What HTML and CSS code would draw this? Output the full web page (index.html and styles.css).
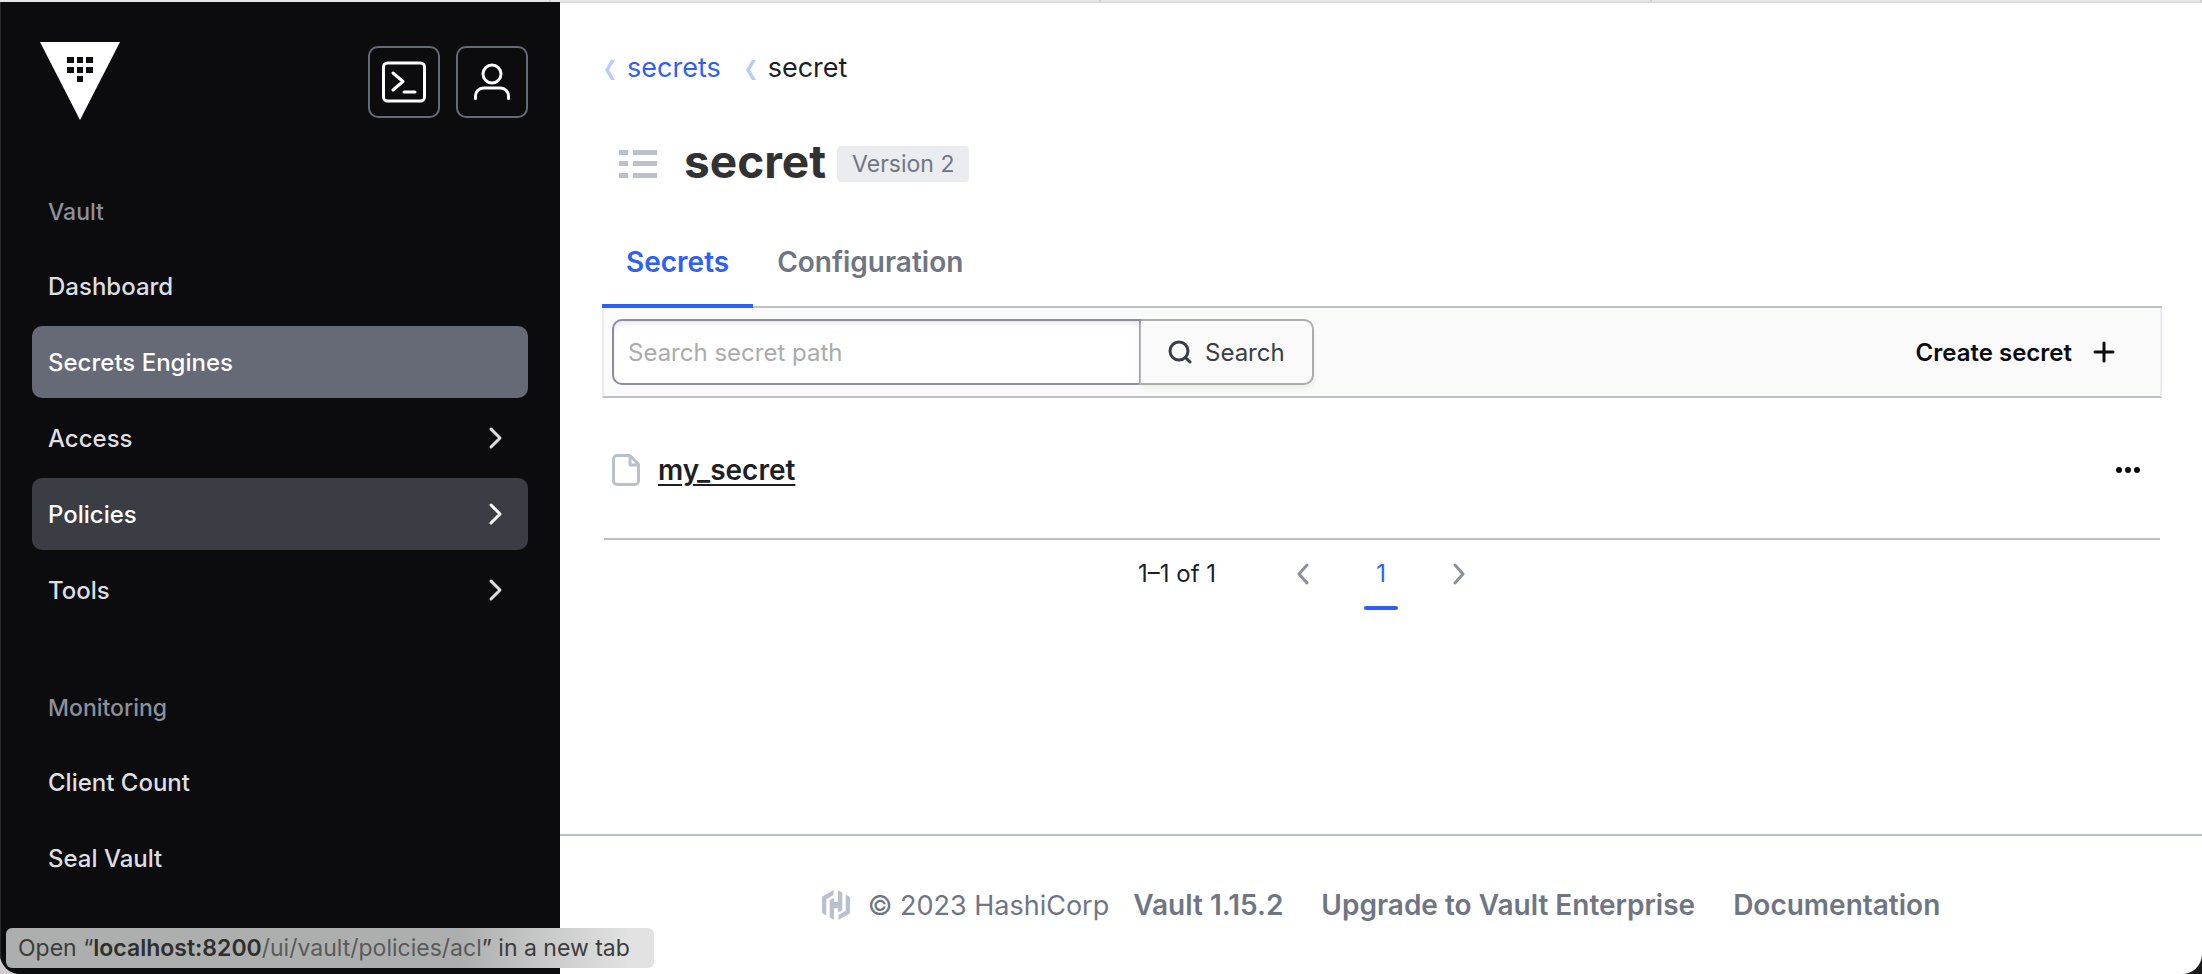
FILE: index.html
```html
<!DOCTYPE html>
<html lang="en">
<head>
<meta charset="utf-8">
<title>Vault</title>
<link rel="stylesheet" href="styles.css">
</head>
<body>
<div class="strip"><span class="strip-tab"></span><span class="strip-tab"></span><span class="strip-tab"></span><span class="strip-tab"></span></div>
<div class="app">
  <aside class="sidebar">
    <header class="brand">
      <a class="logo" href="#" aria-label="Vault home">
        <svg width="80" height="78" viewBox="0 0 80 78"><path fill="#fff" d="M0 0h80L40 78z"/><path fill="#0c0c0e" d="M27 15h7v6h-7zM37 15h6v6h-6zM46 15h7v6h-7zM27 25h7v6h-7zM37 25h6v6h-6zM46 25h7v6h-7zM37 34h6v6h-6z"/></svg>
      </a>
      <div class="brand-actions">
        <button class="icon-btn" aria-label="Console">
          <svg width="48" height="48" viewBox="0 0 48 48" fill="none" stroke="#fff" stroke-width="3" stroke-linecap="round" stroke-linejoin="round"><rect x="3.500" y="5" width="41" height="38" rx="4"/><path d="M13 15l10 8.500-10 8.500M24 34h11"/></svg>
        </button>
        <button class="icon-btn" aria-label="User menu">
          <svg width="48" height="48" viewBox="0 0 48 48" fill="none" stroke="#fff" stroke-width="3" stroke-linecap="round" stroke-linejoin="round"><circle cx="24" cy="16" r="9"/><path d="M7.500 40.500V38a8 8 0 0 1 8-8h17a8 8 0 0 1 8 8v2.500"/></svg>
        </button>
      </div>
    </header>
    <nav class="nav">
      <h2 class="nav-title">Vault</h2>
      <a class="nav-item" href="#">Dashboard</a>
      <a class="nav-item is-active" href="#">Secrets Engines</a>
      <a class="nav-item" href="#">Access<svg class="chev" viewBox="0 0 16 24"><path d="M3 3l9 9-9 9"/></svg></a>
      <a class="nav-item is-hover" href="#">Policies<svg class="chev" viewBox="0 0 16 24"><path d="M3 3l9 9-9 9"/></svg></a>
      <a class="nav-item" href="#">Tools<svg class="chev" viewBox="0 0 16 24"><path d="M3 3l9 9-9 9"/></svg></a>
    </nav>
    <nav class="nav nav-secondary">
      <h2 class="nav-title">Monitoring</h2>
      <a class="nav-item" href="#">Client Count</a>
      <a class="nav-item" href="#">Seal Vault</a>
    </nav>
  </aside>
  <div class="page">
    <main class="content">
      <nav class="crumbs" aria-label="Breadcrumb">
        <a class="crumb" href="#"><svg class="crumb-sep" viewBox="0 0 12 22"><path d="M7 1h4L5 11l6 10H7L1 11z"/></svg>secrets</a>
        <span class="crumb is-current"><svg class="crumb-sep" viewBox="0 0 12 22"><path d="M7 1h4L5 11l6 10H7L1 11z"/></svg>secret</span>
      </nav>
      <header class="title-row">
        <svg width="38" height="28" viewBox="0 0 38 28" fill="#bac1cc"><path d="M0 0h9v5H0zM14 0h24v5H14zM0 11h9v5H0zM14 11h24v5H14zM0 23h9v5H0zM14 23h24v5H14z"/></svg>
        <h1 class="title">secret</h1>
        <span class="badge">Version 2</span>
      </header>
      <nav class="tabs">
        <a class="tab is-active" href="#">Secrets</a>
        <a class="tab" href="#">Configuration</a>
      </nav>
      <div class="toolbar">
        <form class="search">
          <input class="search-input" type="text" placeholder="Search secret path" aria-label="Search secret path">
          <button class="search-btn" type="button"><svg width="24" height="24" viewBox="0 0 24 24" fill="none" stroke="#3b3d45" stroke-width="3" stroke-linecap="round"><circle cx="11" cy="11" r="9"/><path d="M17.500 17.500L22 22"/></svg>Search</button>
        </form>
        <a class="create" href="#">Create secret<svg width="24" height="24" viewBox="0 0 24 24" fill="none" stroke="#0c0c0e" stroke-width="3" stroke-linecap="round"><path d="M12 3v18M3 12h18"/></svg></a>
      </div>
      <div class="row">
        <a class="secret-link" href="#"><svg width="28" height="32" viewBox="0 0 28 32" fill="none" stroke="#bac1cc" stroke-width="3" stroke-linejoin="round"><path d="M5 1.500h13l8.500 9V27a3.500 3.500 0 0 1-3.500 3.500H5A3.500 3.500 0 0 1 1.500 27V5A3.500 3.500 0 0 1 5 1.500zM18 2v9h8"/></svg><span class="secret-name">my_secret</span></a>
        <button class="more" aria-label="More options"><svg width="24" height="6" viewBox="0 0 24 6" fill="#0c0c0e"><circle cx="3" cy="3" r="3"/><circle cx="12" cy="3" r="3"/><circle cx="21" cy="3" r="3"/></svg></button>
      </div>
      <nav class="pager" aria-label="Pagination">
        <span class="pager-info">1–1 of 1</span>
        <button class="pager-btn" aria-label="Previous page"><svg class="pager-chev" viewBox="0 0 14 22"><path d="M11 2L3 11l8 9"/></svg></button>
        <a class="pager-page" href="#">1</a>
        <button class="pager-btn" aria-label="Next page"><svg class="pager-chev" viewBox="0 0 14 22"><path d="M3 2l8 9-8 9"/></svg></button>
      </nav>
    </main>
    <footer class="footer">
      <span class="copyright"><svg width="28" height="30" viewBox="0 0 28 30" fill="#bac1cc"><path d="M11.500 0L0 6.700V23l4.300 2.500V9.200L11.500 5zM16 0v11.900h-4V7.700l-4.300 2.500v17.300L12 30V18.200h4v4.200l4.300-2.500V2.500zM16.500 30L28 23.300V7l-4.300-2.500v16.300L16.500 25z"/></svg>© 2023 HashiCorp</span>
      <a class="foot-link" href="#">Vault 1.15.2</a>
      <a class="foot-link" href="#">Upgrade to Vault Enterprise</a>
      <a class="foot-link" href="#">Documentation</a>
    </footer>
  </div>
</div>
<div class="status">Open “<b>localhost:8200</b><span class="status-path">/ui/vault/policies/acl</span>” in a new tab</div>
</body>
</html>
```
FILE: styles.css
```css
* { box-sizing: border-box; }
body {
  margin: 0;
  min-height: 100vh;
  display: flex;
  flex-direction: column;
  font-family: Inter, "Liberation Sans", sans-serif;
  color: #1d1f24;
  background: linear-gradient(90deg, #cfcdd0 50%, #1a1a1a 50%);
}
a { color: inherit; text-decoration: none; }
button { font: inherit; color: inherit; background: none; border: 0; padding: 0; }
svg { display: block; flex: none; }

.strip { height: 2px; display: grid; grid-template-columns: repeat(4, 1fr); background: #e6e6e6; }
.strip-tab { border-right: 2px solid #d2d2d2; }
.app {
  flex: 1;
  display: flex;
  border-radius: 0 0 20px 20px;
  overflow: hidden;
}

.sidebar {
  flex: none;
  width: 560px;
  padding: 40px 32px 0 31px;
  background: #0c0c0e;
  border-left: 1px solid #2a2a2c;
  color: #dedfe3;
}
.brand { display: flex; justify-content: space-between; padding-left: 8px; }
.brand-actions { display: flex; gap: 16px; padding-top: 4px; }
.icon-btn {
  width: 72px;
  height: 72px;
  display: grid;
  place-items: center;
  border: 2px solid #656a76;
  border-radius: 10px;
}
.nav { display: flex; flex-direction: column; gap: 4px; margin-top: 58px; }
.nav-secondary { margin-top: 48px; }
.nav-title {
  margin: 0;
  padding: 18px 16px;
  font-size: 23px;
  line-height: 32px;
  font-weight: 500;
  color: #8c909c;
}
.nav-item {
  height: 72px;
  padding: 0 24px 0 16px;
  display: flex;
  align-items: center;
  justify-content: space-between;
  border-radius: 10px;
  font-size: 24px;
  font-weight: 500;
}
.nav-item.is-active { background: #656a76; color: #fff; }
.nav-item.is-hover { background: #3b3d45; color: #fff; }
.chev {
  width: 16px;
  height: 24px;
  fill: none;
  stroke: currentColor;
  stroke-width: 3;
  stroke-linecap: round;
  stroke-linejoin: round;
}

.page { flex: 1; min-width: 0; display: flex; flex-direction: column; background: #fff; border-top: 1px solid #d8d8d8; }
.content { flex: 1; padding: 45px 40px 0 42px; }
.crumbs { display: flex; gap: 22px; font-size: 27px; line-height: 40px; }
.crumb { display: flex; align-items: center; gap: 11px; color: #2e60f6; }
.crumb.is-current { color: #1d1f24; }
.crumb-sep { width: 12px; height: 22px; margin-left: 2px; margin-top: 4px; fill: #b9cbfb; }
.title-row { display: flex; align-items: center; padding: 46px 0 0 17px; }
.title { margin: 0 11px 0 27px; padding-bottom: 6px; font-size: 46px; line-height: 54px; font-weight: 700; color: #323232; }
.badge {
  padding: 0 15px;
  border-radius: 4px;
  background: #ebecf0;
  color: #6f7682;
  font-size: 23px;
  line-height: 36px;
}
.tabs { display: flex; margin-top: 24px; border-bottom: 2px solid #bac1cc; }
.tab {
  padding: 24px 24px 22px;
  margin-bottom: -2px;
  font-size: 28px;
  line-height: 40px;
  font-weight: 600;
  color: #6f7682;
  border-bottom: 4px solid transparent;
}
.tab.is-active { color: #2e60f6; border-color: #2e60f6; }
.toolbar {
  height: 90px;
  display: flex;
  align-items: center;
  justify-content: space-between;
  padding: 0 44px 0 8px;
  background: #fafafb;
  border: 2px solid #ebecf0;
  border-top: 0;
  border-bottom-color: #bac1cc;
}
.search { display: flex; }
.search-input {
  width: 529px;
  height: 66px;
  padding: 0 14px;
  border: 2px solid #8c8d9b;
  border-radius: 10px 0 0 10px;
  background: #fff;
  box-shadow: inset 0 4px 6px -2px #e4e4e6;
  font: 24px Inter, "Liberation Sans", sans-serif;
}
.search-input::placeholder { color: #ababab; opacity: 1; }
.search-btn {
  height: 66px;
  padding: 0 27px;
  display: flex;
  align-items: center;
  gap: 13px;
  border: 2px solid #ababab;
  border-left: 0;
  border-radius: 0 10px 10px 0;
  box-shadow: 0 4px 4px #efefef;
  color: #3b3d45;
  font-size: 24px;
}
.create { display: flex; align-items: center; gap: 20px; font-size: 24px; font-weight: 600; color: #0c0c0e; }
.row {
  height: 142px;
  margin: 0 2px;
  padding: 4px 20px 0 8px;
  display: flex;
  align-items: center;
  justify-content: space-between;
  border-bottom: 2px solid #bac1cc;
}
.secret-link { display: flex; align-items: center; gap: 18px; font-size: 28px; font-weight: 600; }
.secret-name { text-decoration: underline; text-decoration-thickness: 2px; text-underline-offset: 4px; }
.pager { display: flex; justify-content: center; align-items: flex-start; padding: 2px 160px 0 0; font-size: 24px; line-height: 64px; }
.pager-info { margin-right: 80px; }
.pager-btn { height: 64px; display: flex; align-items: center; color: #8c909c; }
.pager-chev { width: 14px; height: 22px; fill: none; stroke: currentColor; stroke-width: 3; stroke-linecap: round; stroke-linejoin: round; }
.pager-page {
  width: 34px;
  margin: 0 54px;
  text-align: center;
  color: #2e60f6;
  display: flex;
  flex-direction: column;
}
.pager-page::after { content: ""; height: 4px; border-radius: 2px; background: #2e60f6; }
.footer {
  height: 140px;
  display: flex;
  justify-content: center;
  align-items: center;
  border-top: 2px solid #bac1cc;
  color: #6f7682;
  font-size: 27px;
}
.copyright { display: flex; align-items: center; gap: 18px; margin-right: 24px; }
.foot-link { font-size: 28px; font-weight: 600; }
.foot-link + .foot-link { margin-left: 38px; }

.status {
  position: absolute;
  left: 6px;
  bottom: 6px;
  padding: 0 24px 0 12px;
  border-radius: 6px;
  background: linear-gradient(90deg, #adafae 70%, #e2e2e2 96%);
  color: #3c3c3c;
  font-size: 23px;
  line-height: 40px;
  white-space: nowrap;
}
.status b { font-weight: 600; color: #2f2f2f; }
.status-path { color: #5a5a5a; }
```
